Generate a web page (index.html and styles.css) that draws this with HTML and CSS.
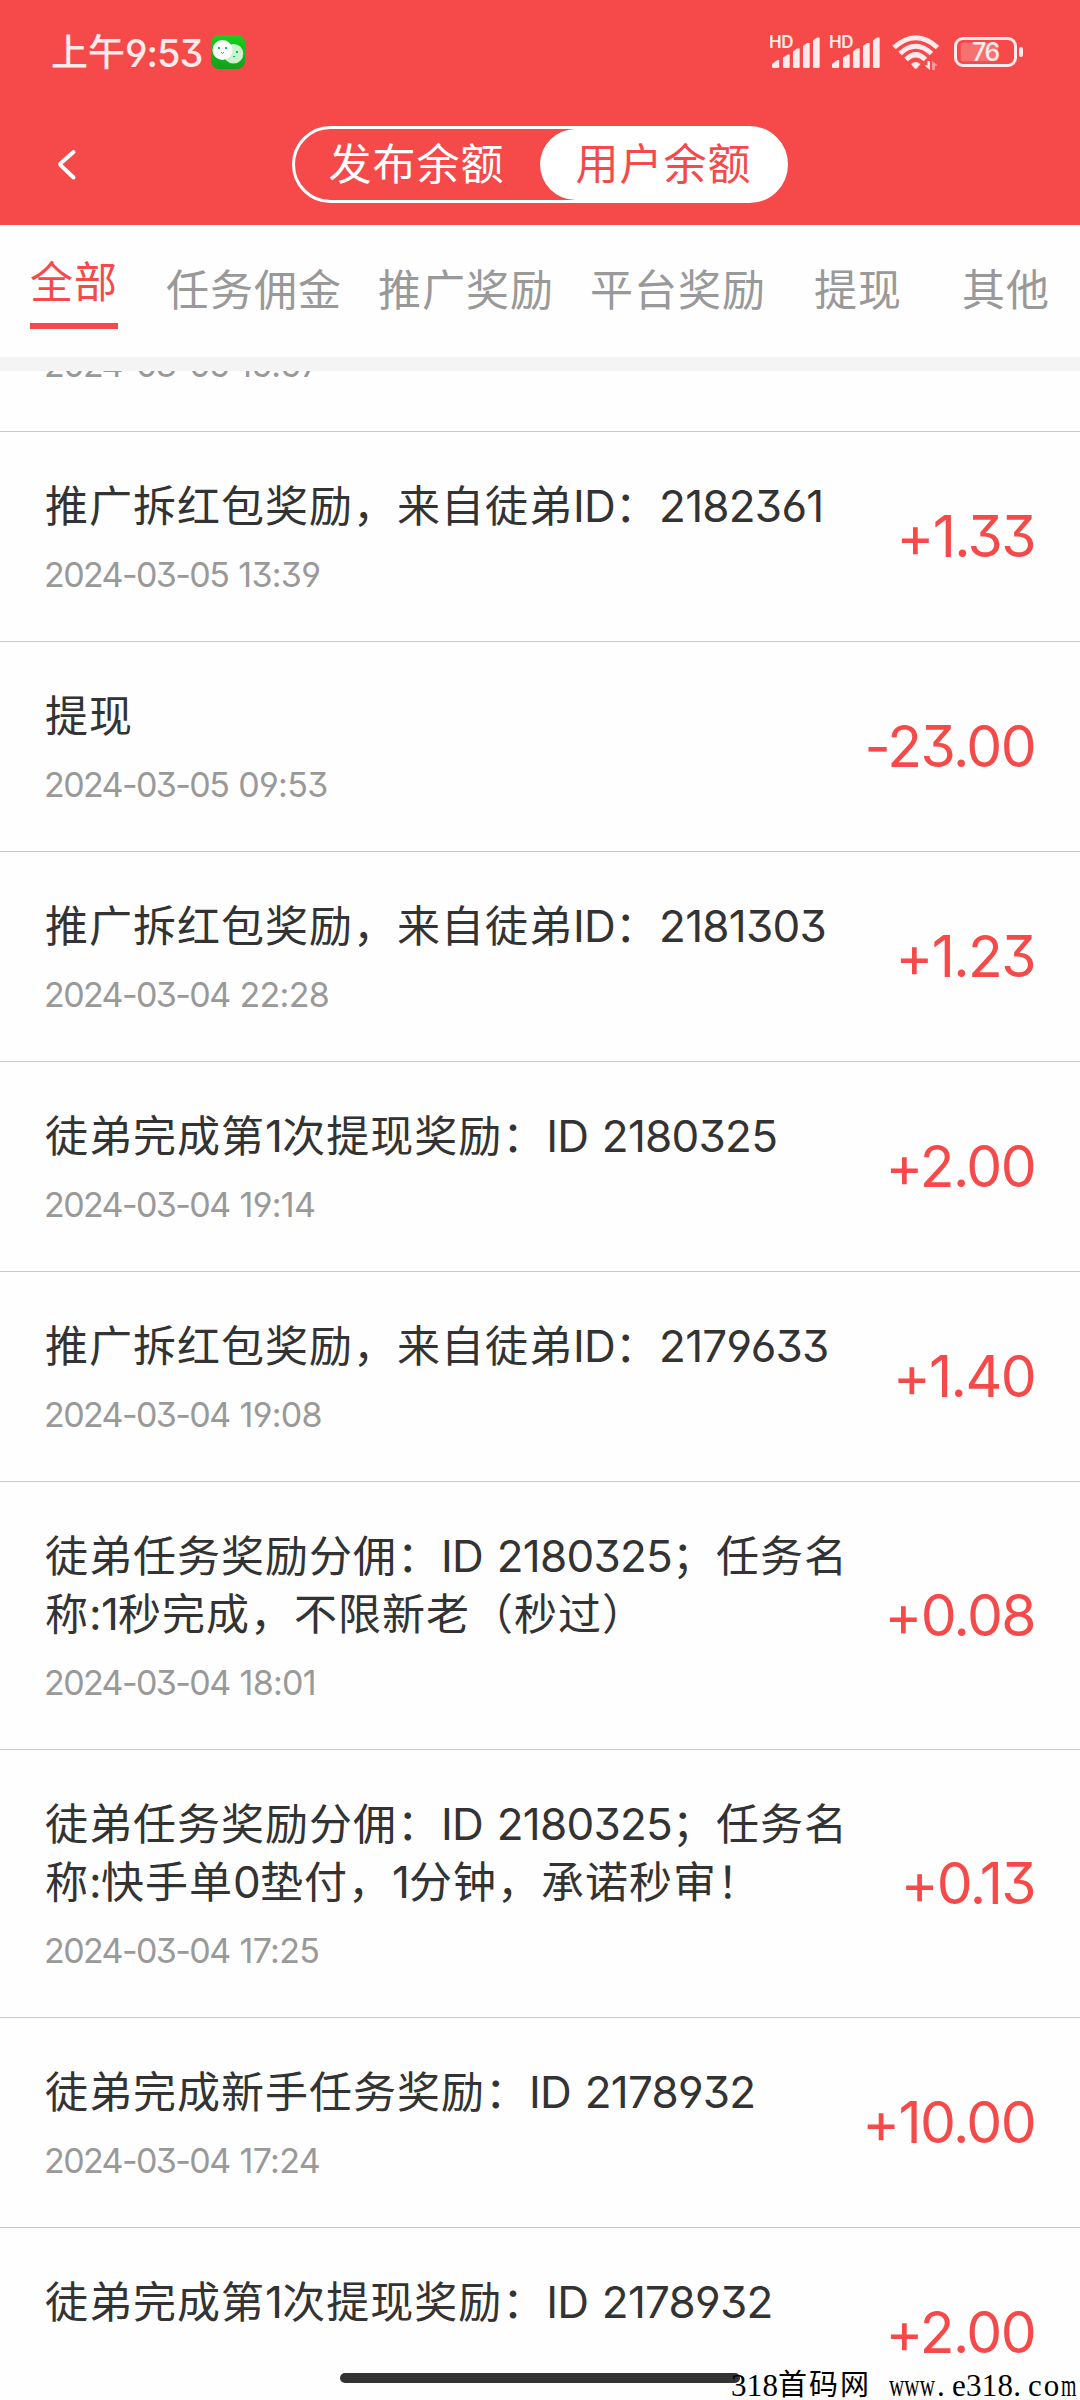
FILE: index.html
```html
<!DOCTYPE html>
<html lang="zh-CN">
<head>
<meta charset="utf-8">
<title>余额明细</title>
<link rel="stylesheet" href="styles.css">
</head>
<body>
<div class="app">
  <header class="header">
    <div class="status">
      <div class="clock"><span class="ampm">上午</span><span class="num">9:53</span></div>
      <svg class="wechat" width="34" height="34" viewBox="0 0 34 34">
        <defs><linearGradient id="g" x1="0" y1="0" x2="0" y2="1"><stop offset="0" stop-color="#17d21b"/><stop offset="1" stop-color="#12a01c"/></linearGradient></defs>
        <rect width="34" height="34" rx="8" fill="url(#g)"/>
        <circle cx="22.5" cy="18.8" r="9.8" fill="#cdf0cf"/>
        <circle cx="11.5" cy="15" r="10" fill="#fff"/>
        <g fill="#10c24a"><rect x="7" y="12" width="2" height="2"/><rect x="14" y="12" width="2" height="2"/><rect x="25" y="16" width="2" height="2"/><rect x="22" y="21" width="2" height="1"/></g>
        <path d="M10 17l1.5 1.5L13 17" fill="none" stroke="#10c24a"/>
      </svg>
      <svg class="signals" width="256" height="40" viewBox="0 0 256 40" fill="#fdeaea">
        <defs>
          <g id="sig">
            <text x="-1" y="18" class="hd">HD</text>
            <path d="M2 36.5V34l5.500-4h1.700v6.500q0 1.500-1.500 1.500H3.500q-1.500 0-1.500-1.500z"/>
            <path d="M13 27.500l5-3h1.700v12q0 1.500-1.500 1.500h-3.700q-1.500 0-1.500-1.500z"/>
            <path d="M23 21.500l4-3h2.700v18q0 1.500-1.500 1.500h-3.700q-1.500 0-1.500-1.500z"/>
            <path d="M33 16l4-3h2.700v23.500q0 1.500-1.500 1.500h-3.700q-1.500 0-1.500-1.500z"/>
            <path d="M43 10.500l4-3h2.700v29q0 1.500-1.500 1.500h-3.700q-1.500 0-1.500-1.500z"/>
          </g>
        </defs>
        <use href="#sig"/>
        <use href="#sig" x="60"/>
        <g fill="none" stroke="#fdeaea" stroke-width="5">
          <path d="M124 17.500Q145.700-2 167.500 17.500"/>
          <path d="M130 23.500Q145.700 9 161.500 23.500"/>
          <path d="M136 29.500Q145.700 20 155.500 29.500"/>
        </g>
        <path d="M141 34q4.700-4 9.500 0L147 38.200q-1.300 1-2.600 0z"/>
        <path d="M154.500 35.500l3-.5v-4h2.500v9z"/>
        <path d="M162 31l6 4.500-3 .3V40h-3z" opacity=".5"/>
        <rect x="185.500" y="8.500" width="60" height="27" rx="7.500" fill="none" stroke="#fdeaea" stroke-width="3"/>
        <rect x="190.700" y="12.800" width="37.300" height="18.500" rx="3" opacity=".25"/>
        <rect x="249" y="17" width="4" height="10" rx="2"/>
        <text x="202" y="31" class="pct">76</text>
      </svg>
    </div>
    <div class="nav">
      <svg class="back" width="24" height="36" viewBox="0 0 24 36" fill="none" stroke="#fff" stroke-width="4" stroke-linecap="round" stroke-linejoin="round"><path d="M17.500 5L5 16q-1.300 1.300 0 2.600L17.500 30.500"/></svg>
      <div class="switch"><span class="seg">发布余额</span><span class="seg on">用户余额</span></div>
    </div>
  </header>
  <nav class="tabs">
    <div class="tab on"><span>全部</span></div>
    <div class="tab wide">任务佣金</div>
    <div class="tab wide">推广奖励</div>
    <div class="tab wide">平台奖励</div>
    <div class="tab">提现</div>
    <div class="tab">其他</div>
  </nav>
  <main class="list">
    <article class="row scrolled"><div class="info"><h2>&nbsp;</h2><time><i>2024-03-05 </i>15:57</time></div></article>
    <article class="row"><div class="info"><h2>推广拆红包奖励，来自徒弟<b>ID</b>：<b>2182361</b></h2><time><i>2024-03-05 </i>13:39</time></div><div class="amount">+1.33</div></article>
    <article class="row"><div class="info"><h2>提现</h2><time><i>2024-03-05 </i>09:53</time></div><div class="amount">-23.00</div></article>
    <article class="row"><div class="info"><h2>推广拆红包奖励，来自徒弟<b>ID</b>：<b>2181303</b></h2><time><i>2024-03-04 </i>22:28</time></div><div class="amount">+1.23</div></article>
    <article class="row"><div class="info"><h2>徒弟完成第<b>1</b>次提现奖励：<b>ID 2180325</b></h2><time><i>2024-03-04 </i>19:14</time></div><div class="amount">+2.00</div></article>
    <article class="row"><div class="info"><h2>推广拆红包奖励，来自徒弟<b>ID</b>：<b>2179633</b></h2><time><i>2024-03-04 </i>19:08</time></div><div class="amount">+1.40</div></article>
    <article class="row"><div class="info"><h2>徒弟任务奖励分佣：<b>ID 2180325</b>；任务名<br>称<b>:1</b>秒完成，不限新老（秒过）</h2><time><i>2024-03-04 </i>18:01</time></div><div class="amount">+0.08</div></article>
    <article class="row"><div class="info"><h2>徒弟任务奖励分佣：<b>ID 2180325</b>；任务名<br>称<b>:</b>快手单<b>0</b>垫付，<b>1</b>分钟，承诺秒审！</h2><time><i>2024-03-04 </i>17:25</time></div><div class="amount">+0.13</div></article>
    <article class="row"><div class="info"><h2>徒弟完成新手任务奖励：<b>ID 2178932</b></h2><time><i>2024-03-04 </i>17:24</time></div><div class="amount">+10.00</div></article>
    <article class="row last"><div class="info"><h2>徒弟完成第<b>1</b>次提现奖励：<b>ID 2178932</b></h2></div><div class="amount">+2.00</div></article>
  </main>
  <div class="home-bar"></div>
  <div class="watermark"><span>318</span><span class="han">首码网</span><span class="thin www">www</span><span>.</span><span class="e">e</span><span>318</span><span>.</span><span class="co">co</span><span class="thin m">m</span></div>
</div>
</body>
</html>
```
FILE: styles.css
```css
* { box-sizing: border-box; }
body {
  margin: 0;
  background: #fefefe;
  font-family: Inter, "Noto Sans CJK SC", sans-serif;
  font-feature-settings: "cv03", "cv04", "cv09";
  color: #333;
}
.app {
  position: relative;
  display: flex;
  flex-direction: column;
  width: 1080px;
  height: 2400px;
  overflow: hidden;
}
.header { height: 225px; flex: none; background: #f64949; color: #fff; }
.status { display: flex; align-items: center; height: 104px; padding: 0 54px 0 51px; }
.clock { display: flex; align-items: center; width: 160px; padding-top: 2px; font-size: 38px; font-weight: 500; line-height: 44px; color: #fdeaea; }
.ampm { width: 74px; font-size: 37px; }
.num { letter-spacing: -1px; }
.signals { margin: -4px 0 0 auto; }
.hd { font: 600 17px Inter, sans-serif; letter-spacing: -0.5px; }
.pct { font: 500 25px Inter, sans-serif; letter-spacing: -1.5px; }
.nav { display: flex; align-items: center; height: 121px; padding-left: 56px; }
.switch {
  display: flex;
  width: 496px;
  height: 77px;
  margin-left: 212px;
  border: 3px solid #fff;
  border-radius: 39px;
  background: linear-gradient(90deg, #f64949 60%, #fff 60%);
}
.seg { flex: 1; font-size: 43px; letter-spacing: 1px; line-height: 71px; text-align: center; }
.seg:first-child { padding-right: 2px; }
.seg.on { padding-left: 2px; background: #fff; color: #f64949; border-radius: 36px; }
.tabs {
  display: flex;
  flex: none;
  height: 146px;
  border-bottom: 14px solid #f4f4f4;
  font-size: 43px;
  letter-spacing: 1px;
  line-height: 130px;
  color: #999;
}
.tab { width: 148px; text-align: center; white-space: nowrap; }
.tab.wide { width: 212px; }
.tab.on { display: flex; justify-content: center; align-items: flex-start; color: #f64949; }
.tab.on span { height: 104px; line-height: 114px; border-bottom: 6px solid #f64949; }
.list { flex: 1; overflow: hidden; }
.row {
  display: flex;
  align-items: center;
  justify-content: space-between;
  padding: 45px 45px 44px 45px;
  border-bottom: 1px solid #c8c8c8;
}
.scrolled { margin-top: -149px; }
.last { height: 210px; }
.last .info { align-self: flex-start; }
h2 { margin: 0; font-size: 43px; letter-spacing: 1px; font-weight: 400; line-height: 58px; white-space: nowrap; }
h2 b { font-size: 44px; font-weight: 400; line-height: 1; letter-spacing: -0.75px; word-spacing: 2px; }
time { display: block; margin: 17px 0 0 -1px; font-size: 34px; line-height: 45px; color: #999; letter-spacing: -0.7px; }
time i { font-style: normal; letter-spacing: -1.6px; word-spacing: 2px; }
.amount { font-size: 57px; line-height: 60px; color: #f64949; letter-spacing: -1.6px; }
.home-bar { position: absolute; left: 340px; top: 2373px; width: 400px; height: 10px; border-radius: 5px; background: #333; }
.watermark {
  position: absolute;
  left: 731px;
  top: 2369px;
  display: flex;
  width: 349px;
  font: 31px/33px "Liberation Serif", "Noto Sans CJK SC", serif;
  color: #000;
  white-space: nowrap;
}
.watermark span { letter-spacing: 0.2px; }
.watermark .han { width: 111px; letter-spacing: 2px; font-size: 29px; }
.watermark .thin { transform: scaleX(0.68); transform-origin: 0 50%; }
.watermark .www { width: 48px; }
.watermark .m { width: 16px; transform: scaleX(0.64); }
.watermark .e { margin-left: 7px; }
.watermark .co { margin-left: 7px; letter-spacing: 2px; }
```
